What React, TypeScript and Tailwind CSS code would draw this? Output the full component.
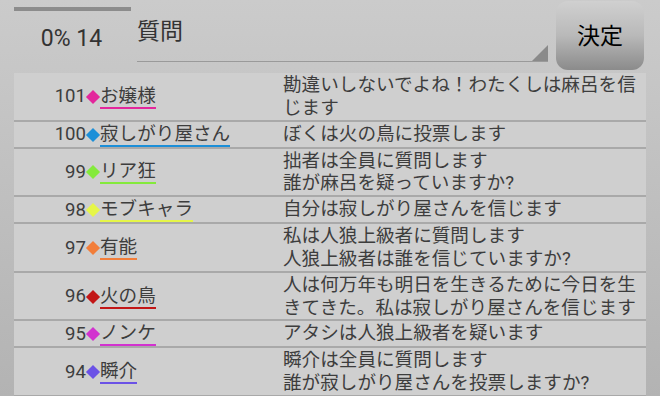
import { FC } from "react";

interface IPost {
  no: number;
  name: string;
  color: string;
  text: string;
}

const posts: IPost[] = [
  { no: 101, name: "お嬢様", color: "#e3279c", text: "勘違いしないでよね！わたくしは麻呂を信じます" },
  { no: 100, name: "寂しがり屋さん", color: "#1c8fd8", text: "ぼくは火の鳥に投票します" },
  { no: 99, name: "リア狂", color: "#84ea3c", text: "拙者は全員に質問します\n誰が麻呂を疑っていますか?" },
  { no: 98, name: "モブキャラ", color: "#e6f648", text: "自分は寂しがり屋さんを信じます" },
  { no: 97, name: "有能", color: "#f27e3a", text: "私は人狼上級者に質問します\n人狼上級者は誰を信じていますか?" },
  { no: 96, name: "火の鳥", color: "#c21616", text: "人は何万年も明日を生きるために今日を生きてきた。私は寂しがり屋さんを信じます" },
  { no: 95, name: "ノンケ", color: "#d232cf", text: "アタシは人狼上級者を疑います" },
  { no: 94, name: "瞬介", color: "#6b52e6", text: "瞬介は全員に質問します\n誰が寂しがり屋さんを投票しますか?" },
];

const PostRow: FC<{ post: IPost }> = ({ post }) => {
  return (
    <div className="flex bg-[#cfcfcf] border-b-2 border-[#a9a9a9] pt-[1px] leading-[22.8px] text-[#3d3d3d]">
      <div className="w-[72px] shrink-0 flex items-center justify-end">
        <span>{post.no}</span>
      </div>
      <div className="w-[14px] shrink-0 flex items-center justify-center">
        <span
          className="block w-[10px] h-[10px] rotate-45"
          style={{ backgroundColor: post.color }}
        />
      </div>
      <div className="w-[183px] shrink-0 flex items-center">
        <span className="border-b-2 leading-[22px]" style={{ borderColor: post.color }}>
          {post.name}
        </span>
      </div>
      <div className="flex-1 whitespace-pre-wrap break-all pr-1">{post.text}</div>
    </div>
  );
};

export default function App() {
  return (
    <div
      className="w-[660px] h-[396px] overflow-hidden bg-gradient-to-b from-[#cbcbcb] to-[#b3b3b3] text-[18.6px]"
      style={{ fontFamily: 'Roboto, "Noto Sans CJK JP", sans-serif' }}
    >
      <div className="flex h-[73px]">
        <div className="w-[137px] shrink-0 flex flex-col">
          <div className="ml-[14px] mt-[7px] w-[117px] h-[4px] bg-[#8c8c8c]" />
          <div className="flex-1 flex items-center justify-center pl-[6px] pb-[5px] text-[23px] text-[#333]">
            0% 14
          </div>
        </div>
        <div className="w-[411px] shrink-0 flex flex-col">
          <div className="h-[62px] relative border-b border-[#9a9a9a] pt-[15px] leading-[33px] text-[23px] text-[#333]">
            質問
            <svg className="absolute right-0 bottom-0" width="16" height="16" viewBox="0 0 16 16">
              <polygon points="0,16 16,0 16,16" fill="#8a8a8a" />
            </svg>
          </div>
        </div>
        <div className="ml-[8px] mt-[1px] w-[88px] h-[69px] rounded-[12px] bg-gradient-to-b from-[#d0d0d0] via-[#b9b9b9] to-[#8b8b8b] flex items-center justify-center text-[23px] text-black pt-[3px]">
          決定
        </div>
      </div>
      <div className="ml-[14px] w-[632px] flex flex-col">
        {posts.map((p) => (
          <PostRow key={p.no} post={p} />
        ))}
      </div>
    </div>
  );
}
